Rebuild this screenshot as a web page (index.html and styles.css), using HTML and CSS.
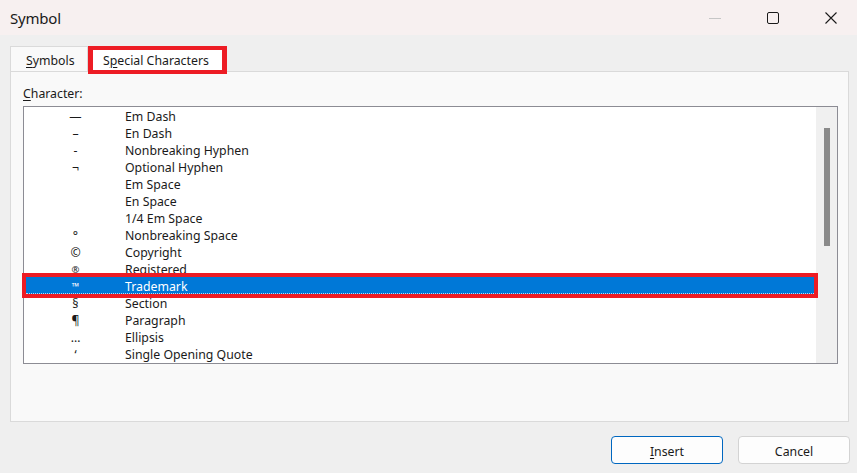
FILE: index.html
```html
<!DOCTYPE html>
<html lang="en">
<head>
    <meta charset="UTF-8">
    <title>Symbol</title>
    <link rel="stylesheet" href="styles.css">
</head>
<body>
<div class="window">
    <div class="titlebar">
        <span class="title">Symbol</span>
        <div class="controls">
            <svg width="12" height="12" viewBox="0 0 12 12"><path d="M0 6.5h12" stroke="#c6c6c6" stroke-width="1"/></svg>
            <svg width="12" height="12" viewBox="0 0 12 12"><rect x="0.5" y="0.5" width="11" height="11" rx="1.5" fill="none" stroke="#1a1a1a" stroke-width="1"/></svg>
            <svg width="12" height="12" viewBox="0 0 12 12"><path d="M0.5 0.5L11.5 11.5M11.5 0.5L0.5 11.5" stroke="#1a1a1a" stroke-width="1.1"/></svg>
        </div>
    </div>
    <div class="main">
        <div class="tabs">
            <div class="tab"><u>S</u>ymbols</div>
            <div class="tab active">S<u>p</u>ecial Characters</div>
        </div>
        <div class="panel">
            <div class="label"><u>C</u>haracter:</div>
            <div class="list">
                <div class="rows">
                    <div class="row"><span class="sym">&#8212;</span><span class="name">Em Dash</span></div>
                    <div class="row"><span class="sym">&#8211;</span><span class="name">En Dash</span></div>
                    <div class="row"><span class="sym">-</span><span class="name">Nonbreaking Hyphen</span></div>
                    <div class="row"><span class="sym">&#172;</span><span class="name">Optional Hyphen</span></div>
                    <div class="row"><span class="sym"></span><span class="name">Em Space</span></div>
                    <div class="row"><span class="sym"></span><span class="name">En Space</span></div>
                    <div class="row"><span class="sym"></span><span class="name">1/4 Em Space</span></div>
                    <div class="row"><span class="sym">&#176;</span><span class="name">Nonbreaking Space</span></div>
                    <div class="row"><span class="sym">&#169;</span><span class="name">Copyright</span></div>
                    <div class="row"><span class="sym small">&#174;</span><span class="name">Registered</span></div>
                    <div class="row selected"><span class="sym small">&#8482;</span><span class="name">Trademark</span></div>
                    <div class="row"><span class="sym">&#167;</span><span class="name">Section</span></div>
                    <div class="row"><span class="sym">&#182;</span><span class="name">Paragraph</span></div>
                    <div class="row"><span class="sym">&#8230;</span><span class="name">Ellipsis</span></div>
                    <div class="row"><span class="sym">&#8216;</span><span class="name">Single Opening Quote</span></div>
                </div>
                <div class="scrollbar"><div class="thumb"></div></div>
            </div>
        </div>
        <div class="footer">
            <button class="btn primary"><u>I</u>nsert</button>
            <button class="btn">Cancel</button>
        </div>
    </div>
</div>
</body>
</html>
```

FILE: styles.css
```css
* {
    margin: 0;
    padding: 0;
    box-sizing: border-box;
}
html, body {
    width: 857px;
    height: 473px;
    overflow: hidden;
    background: #efefef;
}
body {
    font-family: "Noto Sans", "Open Sans", sans-serif;
    font-size: 12.3px;
    color: #1a1a1a;
}
u {
    text-decoration: underline;
    text-underline-offset: 2px;
}
.titlebar {
    height: 35px;
    display: flex;
    align-items: center;
    padding-left: 10px;
    background: #f7f0f0;
}
.title {
    font-size: 15px;
    letter-spacing: -0.2px;
}
.controls {
    margin-left: auto;
    display: flex;
    gap: 46px;
    padding-right: 20px;
}
.controls svg {
    display: block;
}
.main {
    padding: 11px 8px 0 10px;
}
.tabs {
    display: flex;
    align-items: flex-end;
    height: 25px;
}
.tab {
    height: 25px;
    line-height: 27px;
    padding-left: 15px;
    width: 78px;
    border: 1px solid #dadada;
    border-bottom: none;
    background: #f9f9f9;
}
.tab.active {
    position: relative;
    z-index: 1;
    width: 139px;
    height: 28px;
    margin-bottom: -3px;
    padding-left: 10px;
    line-height: 21px;
    border: 5px solid #ed1c24;
    border-top-width: 4px;
    border-bottom-width: 4px;
    background: #fff;
}
.panel {
    height: 351px;
    border: 1px solid #dadada;
    background: #f9f9f9;
    padding: 13px 10px 0 12px;
}
.label {
    height: 17px;
    line-height: 17px;
    margin-bottom: 4px;
}
.list {
    display: flex;
    height: 258px;
    border: 1px solid #8c8c94;
    background: #fff;
}
.rows {
    flex: 1;
}
.row {
    display: flex;
    height: 17px;
    line-height: 19px;
    margin: 0 2px;
}
.sym {
    width: 99px;
    text-align: center;
}
.sym.small {
    font-size: 9.5px;
}
.row.selected {
    position: relative;
    z-index: 1;
    background: #0078d7;
    color: #fff;
    outline: 4px solid #ed1c24;
    border-bottom: 1px dotted #b8d8f4;
}
.scrollbar {
    width: 21px;
    background: #f0f0f0;
    padding-top: 21px;
}
.thumb {
    width: 6px;
    height: 118px;
    margin: 0 auto;
    background: #8a8a8a;
}
.footer {
    display: flex;
    justify-content: flex-end;
    gap: 15px;
    margin-top: 14px;
    margin-right: -1px;
}
.btn {
    width: 112px;
    height: 28px;
    padding-top: 2px;
    border: 1px solid #d3d3d3;
    border-radius: 4px;
    background: #fdfdfd;
    font-family: inherit;
    font-size: 12.3px;
    color: #1a1a1a;
}
.btn.primary {
    border-color: #0067c0;
}
```
